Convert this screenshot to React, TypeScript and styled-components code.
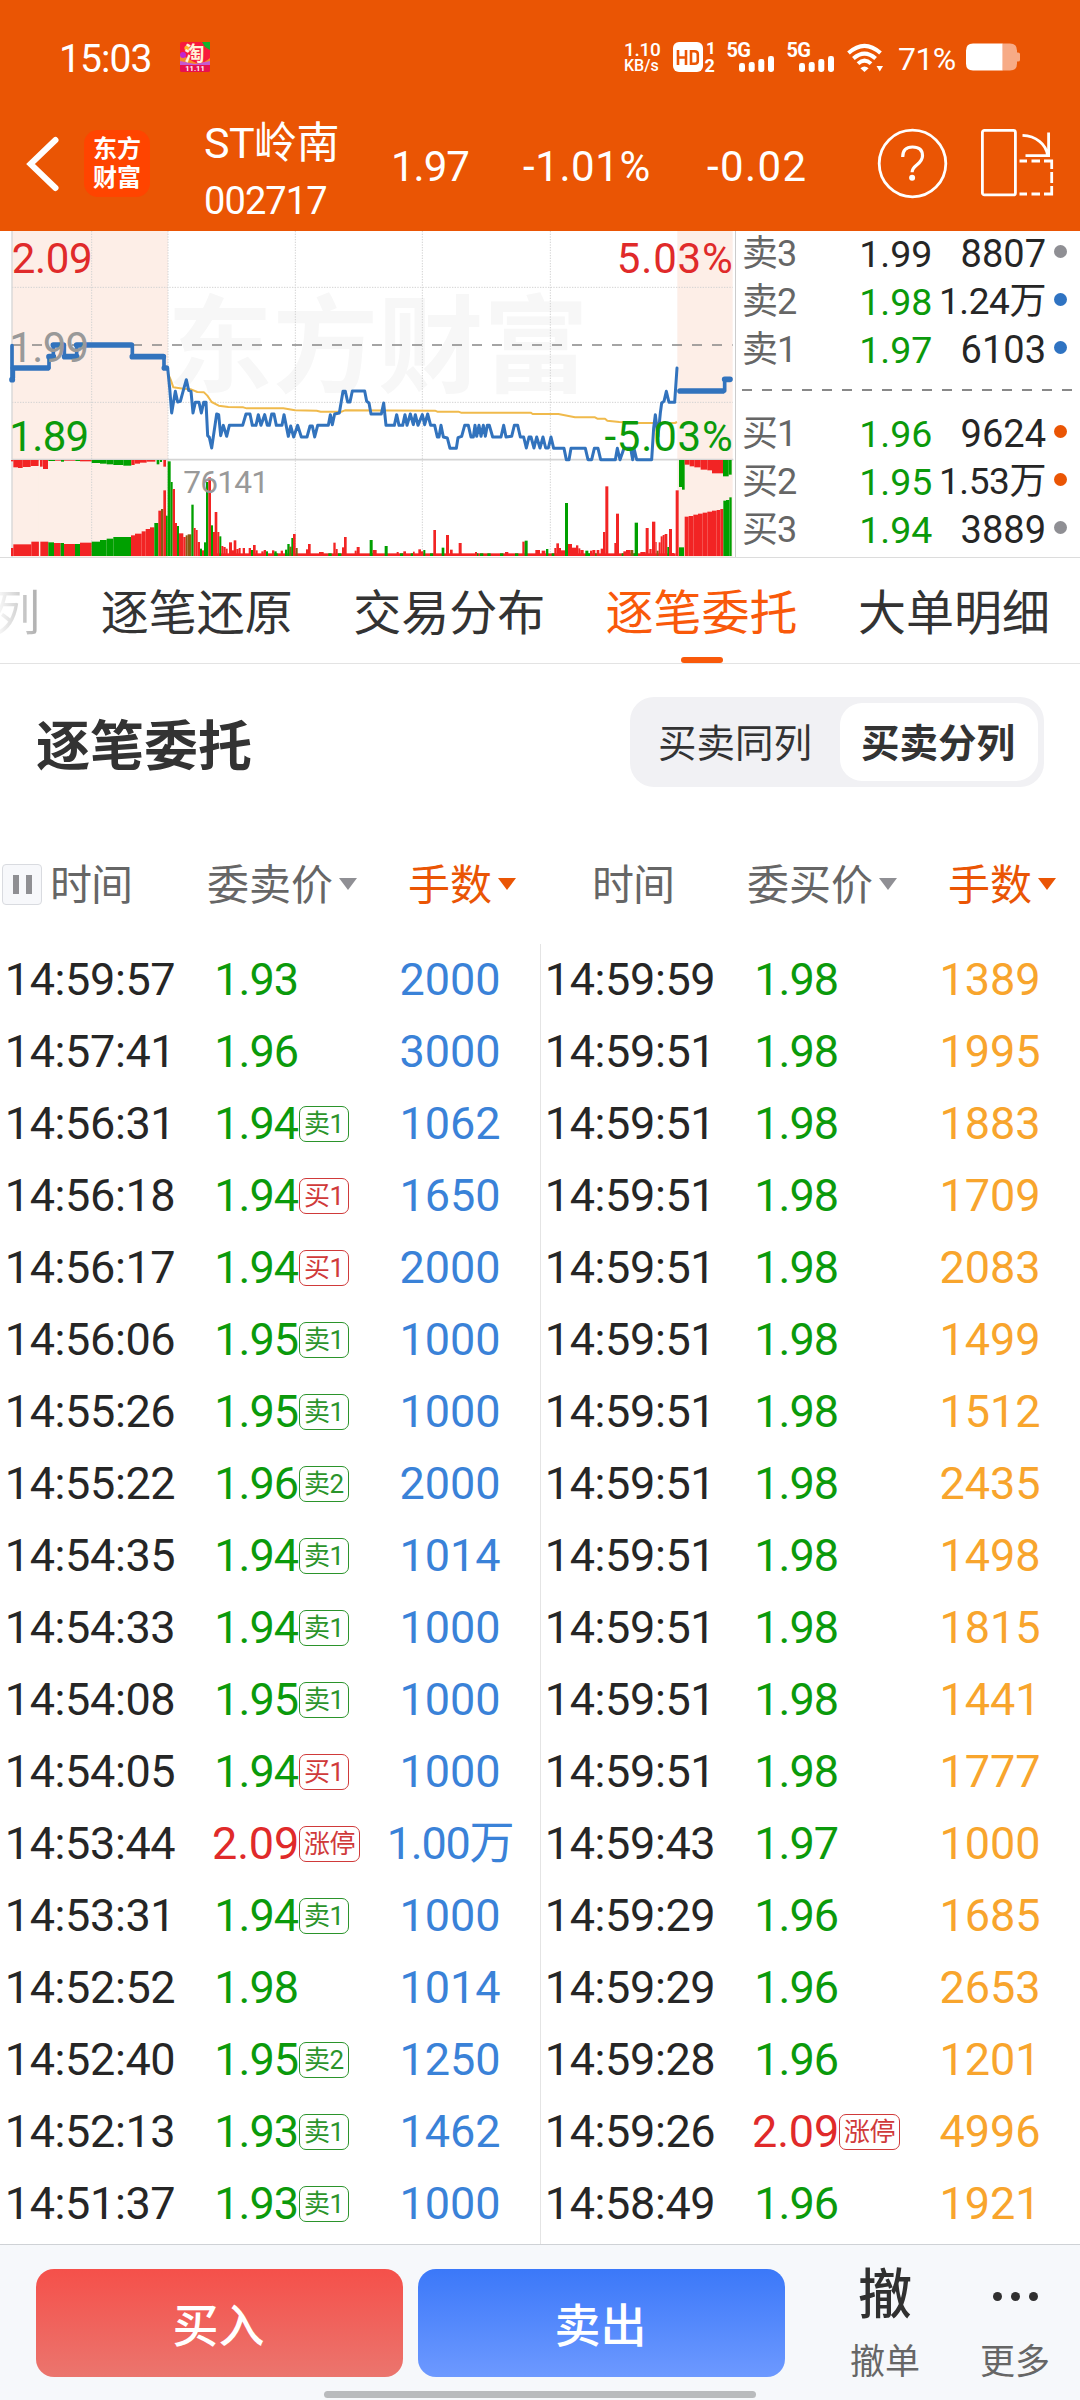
import React from 'react';
import styled, { createGlobalStyle } from 'styled-components';

const GlobalStyle = createGlobalStyle`
  * { box-sizing: border-box; }
  html, body { margin: 0; padding: 0; background: #fff; }
  body {
    width: 1080px;
    font-family: Roboto, "Noto Sans CJK SC", sans-serif;
    color: #333;
    overflow-x: hidden;
  }
  svg { overflow: visible; flex: none; }
`;

const ORANGE = '#ea5504';
const GREEN = '#0b9a0b';
const RED = '#e02a2a';
const BLUE = '#3a82d8';
const AMBER = '#f8a52d';

const Page = styled.div`
  width: 1080px;
  height: 2400px;
  display: flex;
  flex-direction: column;
  overflow: hidden;
  background: #fff;
`;

/* ---------- header ---------- */

const Header = styled.header`
  height: 231px;
  flex: none;
  background: ${ORANGE};
  color: #fff;
`;

const StatusBar = styled.div`
  height: 96px;
  padding: 18px 60px 0 59px;
  display: flex;
  align-items: center;
`;

const Clock = styled.span`
  width: 121px;
  font-size: 39px;
  letter-spacing: -0.9px;
  line-height: 40px;
  padding-top: 4px;
`;

const StatusRight = styled.div`
  margin-left: auto;
  display: flex;
  align-items: center;
  height: 30px;
`;

const NetSpeed = styled.div`
  width: 49px;
  display: flex;
  flex-direction: column;
  font-weight: 500;
  font-size: 19px;
  line-height: 17px;
  letter-spacing: -0.3px;
  small { font-size: 16px; line-height: 15px; letter-spacing: 0; }
`;

const Percent = styled.span`
  width: 68px;
  font-size: 32px;
  line-height: 30px;
  letter-spacing: -0.6px;
  padding-top: 3px;
`;

const NavBar = styled.div`
  height: 135px;
  display: flex;
  align-items: center;
  padding-left: 24px;
`;

const Brand = styled.div`
  width: 66px;
  height: 67px;
  margin-left: 22px;
  padding-bottom: 6px;
  border-radius: 14px;
  background: #ff4400;
  display: flex;
  flex-direction: column;
  align-items: center;
  justify-content: center;
  font: 700 24px/29px "Noto Sans CJK SC", sans-serif;
`;

const StockName = styled.div`
  width: 187px;
  margin-left: 54px;
  padding-top: 14px;
  display: flex;
  flex-direction: column;
`;

const NameLine = styled.span`
  font-size: 43px;
  line-height: 58px;
  white-space: nowrap;
  letter-spacing: -0.6px;
`;

const CodeLine = styled.span`
  font-size: 38px;
  line-height: 52px;
  letter-spacing: -0.9px;
  margin-top: 3px;
`;

const Quote = styled.span<{ $w: number; $ls?: number }>`
  width: ${(p) => p.$w}px;
  font-size: 42px;
  line-height: 50px;
  padding-top: 6px;
  white-space: nowrap;
  letter-spacing: ${(p) => p.$ls ?? 0}px;
`;

/* ---------- chart + order book ---------- */

const Market = styled.section`
  height: 327px;
  flex: none;
  display: flex;
  border-bottom: 1px solid #dcdcdc;
`;

const Book = styled.div`
  width: 345px;
  height: 326px;
  border-left: 1px solid #ccc;
  display: flex;
  flex-direction: column;
  padding: 0 13px 0 6px;
`;

const BookRow = styled.div`
  height: 48px;
  display: flex;
  align-items: center;
  font-size: 37.5px;
  line-height: 48px;
  white-space: nowrap;
  &:first-child { margin-top: -1px; }
`;

const BookLabel = styled.span`
  width: 70px;
  font-size: 36px;
  color: #666;
  letter-spacing: -1px;
`;

const BookPrice = styled.span<{ $c: string }>`
  width: 121px;
  text-align: right;
  color: ${(p) => p.$c};
`;

const BookQty = styled.span<{ $wide: boolean }>`
  width: 114px;
  color: #262626;
  display: flex;
  justify-content: flex-end;
  font-size: ${(p) => (p.$wide ? 37 : 38)}px;
  letter-spacing: ${(p) => (p.$wide ? -0.4 : 0)}px;
`;

const BookDot = styled.i<{ $c: string }>`
  width: 13px;
  height: 13px;
  margin: 0 0 5px 8px;
  border-radius: 50%;
  background: ${(p) => p.$c};
`;

const BookSplit = styled.div`
  height: 36px;
  padding-top: 15px;
  &::before {
    content: '';
    display: block;
    width: 331px;
    height: 2px;
    background: repeating-linear-gradient(90deg, #888 0 10px, transparent 10px 20px);
  }
`;

/* ---------- tabs ---------- */

const Tabs = styled.nav`
  height: 106px;
  flex: none;
  display: flex;
  justify-content: flex-end;
  gap: 60.4px;
  padding-right: 30px;
  border-bottom: 1px solid #e3e3e3;
  overflow: hidden;
`;

const Tab = styled.div<{ $on?: boolean; $fade?: boolean }>`
  flex: none;
  display: flex;
  flex-direction: column;
  align-items: center;
  font-size: 48px;
  line-height: 99px;
  padding-top: 6px;
  white-space: nowrap;
  color: ${(p) => (p.$on ? '#f9590a' : '#333')};
  ${(p) =>
    p.$fade &&
    `background: linear-gradient(90deg, #fff 5%, #aaa 100%);
     background-clip: text; -webkit-background-clip: text; color: transparent;`}
  &::after {
    content: '';
    width: 42px;
    height: 6px;
    margin-top: -6px;
    border-radius: 3px;
    background: ${(p) => (p.$on ? '#f9590a' : 'transparent')};
  }
`;

const TitleRow = styled.div`
  height: 144px;
  flex: none;
  display: flex;
  align-items: center;
  justify-content: space-between;
  padding: 12px 36px 0;
`;

const Title = styled.h2`
  margin: 0;
  padding-top: 11px;
  font-size: 54px;
  font-weight: 600;
  line-height: 70px;
`;

const Segmented = styled.div`
  width: 414px;
  height: 90px;
  padding: 6px;
  display: flex;
  background: #f1f1f4;
  border-radius: 24px;
`;

const Segment = styled.div<{ $on?: boolean }>`
  flex: ${(p) => (p.$on ? '0 0 198px' : '1')};
  padding: 1px ${(p) => (p.$on ? 2 : 6)}px 0 0;
  border-radius: 22px;
  font-size: 38.5px;
  line-height: 80px;
  text-align: center;
  font-weight: ${(p) => (p.$on ? 700 : 400)};
  background: ${(p) => (p.$on ? '#fff' : 'transparent')};
`;

/* ---------- order table ---------- */

const HeadRow = styled.div`
  height: 136px;
  flex: none;
  display: grid;
  grid-template-columns: repeat(6, 180px);
  align-items: center;
  font-size: 42px;
  line-height: 60px;
  color: #666;
  padding-top: 19px;
`;

const HeadCell = styled.div<{ $pad: number; $hot?: boolean; $ls?: number }>`
  display: flex;
  align-items: center;
  padding-left: ${(p) => p.$pad}px;
  letter-spacing: ${(p) => p.$ls ?? 0}px;
  color: ${(p) => (p.$hot ? ORANGE : '#666')};
  white-space: nowrap;
`;

const Caret = styled.i<{ $c: string; $gap: number }>`
  margin: 0 0 4px ${(p) => p.$gap}px;
  border: 9px solid transparent;
  border-top: 12px solid ${(p) => p.$c};
  border-bottom: 0;
`;

const Pause = styled.div`
  width: 40px;
  height: 41px;
  margin: 0 8px 3px 0;
  border: 1px solid #d9dbe0;
  border-radius: 4px;
  background: #f7f8fb;
  display: flex;
  align-items: center;
  justify-content: center;
  gap: 7px;
  &::before, &::after {
    content: '';
    width: 6px;
    height: 19px;
    background: #8f8f93;
  }
`;

const Halves = styled.div`
  height: 1300px;
  flex: none;
  display: grid;
  grid-template-columns: 540px 540px;
  overflow: hidden;
`;

const Half = styled.div<{ $line?: boolean }>`
  box-shadow: ${(p) => (p.$line ? 'inset 1px 0 #e4e4e4' : 'none')};
`;

const Row = styled.div`
  height: 72px;
  display: grid;
  grid-template-columns: 180px 180px 180px;
  align-items: center;
  font-size: 45px;
  line-height: 72px;
  white-space: nowrap;
`;

const Time = styled.span`
  text-align: center;
  color: #262626;
  letter-spacing: -0.4px;
`;

const PriceCell = styled.span`
  display: flex;
  align-items: center;
`;

const Price = styled.span<{ $limit: boolean }>`
  width: ${(p) => (p.$limit ? 119 : 118)}px;
  margin-right: ${(p) => (p.$limit ? 0 : 1)}px;
  text-align: right;
  letter-spacing: ${(p) => (p.$limit ? -0.2 : -1)}px;
  color: ${(p) => (p.$limit ? RED : GREEN)};
`;

const Badge = styled.span<{ $c: string }>`
  height: 36px;
  padding: 0 4px;
  border: 1.5px solid ${(p) => p.$c};
  border-radius: 7px;
  color: ${(p) => p.$c};
  font-size: 26px;
  line-height: 34px;
  letter-spacing: -0.5px;
`;

const Qty = styled.span<{ $c: string; $wide: boolean }>`
  text-align: center;
  color: ${(p) => p.$c};
  letter-spacing: ${(p) => (p.$wide ? -1.2 : 0)}px;
`;

/* ---------- footer ---------- */

const Footer = styled.footer`
  height: 157px;
  flex: none;
  display: flex;
  flex-direction: column;
  align-items: center;
  background: #f6f8fb;
  border-top: 1px solid #cfd2d6;
`;

const Actions = styled.div`
  width: 1080px;
  height: 146px;
  padding: 24px 0 0 36px;
  display: flex;
`;

const Trade = styled.button<{ $from: string; $to: string }>`
  width: 367px;
  height: 108px;
  margin-right: 15px;
  padding: 0 2px 3px 0;
  border: 0;
  border-radius: 18px;
  font: 500 46px/104px "Noto Sans CJK SC", sans-serif;
  color: #fff;
  background: linear-gradient(${(p) => p.$from}, ${(p) => p.$to});
`;

const Tool = styled.div<{ $w: number }>`
  width: ${(p) => p.$w}px;
  height: 108px;
  display: flex;
  flex-direction: column;
  align-items: center;
  font-size: 35px;
  line-height: 44px;
  color: #666;
`;

const ToolGlyph = styled.div`
  height: 54px;
  flex: none;
  margin-bottom: 18px;
  display: flex;
  align-items: center;
  gap: 9px;
  font-size: 54px;
  line-height: 54px;
  font-weight: 500;
  color: #303030;
`;

const Dot = styled.i`
  width: 9px;
  height: 9px;
  border-radius: 50%;
  background: #303030;
`;

const HomeBar = styled.div`
  width: 432px;
  height: 7px;
  border-radius: 4px;
  background: #b9bbbd;
`;

/* ---------- drawings ---------- */

const TaoIcon = () => (
  <svg width="30" height="30" viewBox="0 0 30 30">
    <rect width="30" height="30" rx="2" fill="#f8193c" />
    <path d="M0 12 Q7 16 14 20 T30 16 V23 H0Z" fill="#f78a28" />
    <path d="M0 19 L15 22 L30 19 V24 H0Z" fill="#c65ad0" />
    <path d="M22 0 H30 V8 L25 5Z" fill="#12b42c" />
    <circle cx="3" cy="13" r="3" fill="#c026d0" />
    <circle cx="7" cy="6" r="2.6" fill="#ffb52a" />
    <text x="4.5" y="19" fontSize="20" fontWeight="700" fill="#fff3d8" fontFamily="Noto Sans CJK SC, sans-serif">淘</text>
    <path d="M0 23 H30 V28 Q30 30 28 30 H2 Q0 30 0 28Z" fill="#e8104f" />
    <text x="15" y="29.4" fontSize="7.5" fontWeight="700" fill="#fff" textAnchor="middle">11.11</text>
  </svg>
);

const HdIcon = () => (
  <svg width="54" height="30" viewBox="0 0 54 30">
    <rect width="30" height="30" rx="6" fill="#fff" />
    <path d="M5 8 V23 M13 8 V23 M5 15.5 H13 M18 9.2 H21.5 Q24.8 9.2 24.8 12 V19 Q24.8 21.8 21.5 21.8 H18Z" stroke={ORANGE} strokeWidth="2.6" fill="none" />
    <text x="33" y="12.3" fontSize="17" fontWeight="700" fill="#fff">1</text>
    <text x="31.5" y="29.8" fontSize="18" fontWeight="700" fill="#fff">2</text>
  </svg>
);

const Signal = () => (
  <svg width="60" height="30" viewBox="0 0 60 30">
    <text x="-0.5" y="14.6" fontSize="20" fontWeight="700" fill="#fff" letterSpacing="-0.8">5G</text>
    <rect x="12" y="21" width="6" height="9" rx="2.4" fill="#fff" />
    <rect x="21.7" y="20" width="6" height="10" rx="2.4" fill="#fff" />
    <rect x="31.3" y="17" width="6" height="13" rx="2.4" fill="#fff" />
    <rect x="41" y="14" width="6" height="16" rx="2.4" fill="#fff" />
  </svg>
);

const Wifi = () => (
  <svg width="51" height="30" viewBox="0 0 51 30">
    <g fill="none" stroke="#fff" strokeWidth="4">
      <path d="M1.5 11 Q17.5 -3.4 33.5 11" />
      <path d="M6.4 16.5 Q17.5 6.6 28.6 16.5" />
      <path d="M11 21.6 Q17.5 15.6 24 21.6" />
    </g>
    <path d="M13.4 26.2 Q17.5 22.8 21.6 26.2 L17.5 30Z" fill="#fff" />
    <path d="M29.5 24 H36 L32.8 29.5Z" fill="#fff" />
  </svg>
);

const Battery = () => (
  <svg width="54" height="28" viewBox="0 0 54 28">
    <path d="M7 0.5 H44 Q51 0.5 51 7.5 V9.5 H52 Q54 9.5 54 11 V17 Q54 18.5 52 18.5 H51 V20.5 Q51 27.5 44 27.5 H36 V0.5Z" fill="#f7ab86" />
    <path d="M36.4 0.5 H7 Q0 0.5 0 7.5 V20.5 Q0 27.5 7 27.5 H36.4Z" fill="#fff" />
  </svg>
);

const Back = () => (
  <svg width="38" height="60" viewBox="0 0 38 60">
    <path d="M31.5 6 L6.5 30 L31.5 54" fill="none" stroke="#fff" strokeWidth="6" strokeLinecap="round" />
  </svg>
);

const HelpIcon = () => (
  <svg width="70" height="70" viewBox="0 0 70 70" fill="none" stroke="#fff" strokeWidth="2.8">
    <circle cx="34.5" cy="34.5" r="33.3" />
    <path d="M24.7 28 Q24.7 18 34.5 18 Q44.5 18 44.5 26.8 Q44.5 31.5 39 35.7 Q34.1 39.5 34.1 43.3" strokeWidth="3.2" />
    <circle cx="34.1" cy="48.8" r="3" fill="#fff" stroke="none" />
  </svg>
);

const RotateSvg = styled.svg`
  margin-left: 32px;
`;

const RotateIcon = () => (
  <RotateSvg width="74" height="70" viewBox="0 1 74 70" fill="none" stroke="#fff" strokeWidth="2.8">
    <rect x="2.4" y="2.4" width="33" height="64.5" rx="2" />
    <path d="M42.5 7.4 C56 8 66 16 67.5 27 M68.6 4.5 V27.6 H45.5" />
    <path d="M39.5 33 H47 M51.5 33 H60 M64 33 H71.7 V41 M71.7 44 V55 M71.7 58 V66 H64 M60 66 H51.5 M47 66 H39.5" />
  </RotateSvg>
);

/* Chart geometry is kept at three units per pixel. */
const PRICE =
  '495,420 503,420 509,480 515,555 526,490 533,522 541,520 550,487 559,455 566,487 573,490 579,555 586,523 597,523 604,555 611,523 618,523 623,623 628,628 635,660 650,558 656,560 662,623 670,592 680,625 688,592 728,592 738,558 750,558 757,592 768,592 775,560 783,592 794,560 802,592 808,592 815,558 822,558 829,592 846,592 852,560 865,625 872,594 881,627 893,592 904,627 921,627 930,594 937,594 944,627 953,592 985,592 991,560 997,590 1004,558 1018,555 1029,490 1036,490 1043,522 1050,522 1057,489 1094,489 1100,520 1107,525 1113,558 1144,558 1151,525 1158,592 1183,592 1190,560 1197,592 1208,592 1215,560 1221,592 1231,558 1240,590 1246,560 1254,592 1267,560 1274,590 1283,558 1292,592 1304,592 1312,627 1317,627 1323,592 1330,627 1342,630 1350,661 1369,661 1374,629 1385,625 1394,592 1405,592 1413,627 1420,627 1425,592 1430,625 1437,592 1443,625 1450,592 1456,625 1462,592 1468,592 1478,627 1503,627 1511,592 1518,627 1535,625 1543,592 1553,592 1561,627 1571,627 1579,660 1587,627 1593,627 1602,660 1610,627 1620,660 1629,627 1637,660 1645,660 1653,627 1661,661 1692,661 1699,695 1707,695 1713,661 1756,661 1764,695 1775,695 1783,661 1794,661 1802,695 1846,695 1852,661 1860,695 1872,661 1892,661 1898,695 1902,661 1910,695 1955,695 1961,600 1966,560 1974,625 1981,555 1985,525 1992,520 1999,490 2007,523 2024,523 2031,420';

const AVERAGE =
  '503,435 512,455 520,478 550,482 573,484 592,492 612,493 622,503 635,522 656,533 685,537 730,538 740,541 850,541 885,547 950,548 962,551 1025,551 1035,547 1305,548 1312,551 1375,551 1383,554 1592,554 1598,558 1675,558 1725,568 1785,568 1792,572 1815,572 1822,578 1858,582 1910,585 2025,585 2031,582';

type Bar = [number, number, number, string];
const R = '#f22424';
const G = '#00a000';
const B = '#8a5a12';

const VOLUME: Bar[] = [
  [33, 7, 960, R], [40, 54, 949, R], [94, 23, 941, R], [121, 24, 941, R], [145, 17, 943, G], [162, 20, 945, R],
  [182, 10, 945, G], [192, 33, 948, R], [225, 15, 948, G], [240, 35, 944, R], [275, 25, 941, G], [300, 20, 936, G],
  [320, 20, 932, G], [340, 53, 927, G], [393, 12, 922, R], [405, 20, 917, R], [425, 12, 910, R], [437, 13, 903, R],
  [450, 13, 898, R], [463, 12, 885, G], [475, 8, 848, R], [483, 7, 843, B], [490, 8, 787, R], [498, 5, 863, G],
  [503, 9, 700, G], [512, 6, 762, G], [518, 7, 783, R], [525, 6, 885, R], [531, 6, 894, G], [537, 13, 916, R],
  [550, 7, 927, R], [557, 6, 922, B], [563, 11, 919, B], [574, 7, 830, G], [581, 6, 900, R], [587, 6, 906, R],
  [593, 7, 942, R], [600, 6, 962, G], [606, 6, 967, R], [612, 6, 943, G], [618, 7, 762, G], [625, 8, 748, R],
  [633, 6, 892, G], [639, 6, 912, R], [644, 8, 852, R], [652, 6, 912, R], [658, 6, 925, G], [664, 6, 954, R],
  [670, 7, 957, R], [677, 6, 962, R], [687, 9, 943, R], [696, 6, 967, R], [701, 8, 937, R], [709, 7, 963, R],
  [716, 6, 960, R], [728, 7, 960, R], [746, 7, 960, R], [753, 6, 966, G], [759, 8, 951, R], [767, 6, 967, R],
  [784, 7, 970, R], [791, 7, 966, R], [798, 6, 970, G], [816, 7, 967, R], [823, 7, 970, G], [842, 7, 968, R],
  [855, 7, 965, G], [862, 7, 948, G], [868, 7, 956, B], [874, 6, 930, G], [879, 8, 918, R], [887, 6, 960, B],
  [918, 6, 964, R], [924, 8, 948, R], [957, 14, 972, R], [1000, 7, 944, R], [1007, 6, 963, R], [1026, 6, 958, R],
  [1032, 8, 927, R], [1064, 6, 968, R], [1070, 9, 957, R], [1109, 9, 936, G], [1118, 12, 966, R], [1154, 9, 954, G],
  [1190, 6, 972, R], [1210, 8, 970, R], [1239, 5, 971, R], [1255, 8, 964, R], [1263, 7, 970, R], [1270, 6, 966, G],
  [1300, 8, 906, R], [1325, 8, 959, G], [1338, 9, 921, R], [1350, 8, 965, R], [1376, 9, 945, R], [1425, 6, 972, R],
  [1515, 10, 972, R], [1567, 7, 941, R], [1574, 9, 938, G], [1606, 14, 966, R], [1625, 11, 968, R], [1638, 7, 963, G],
  [1663, 6, 960, R], [1669, 8, 946, R], [1677, 6, 960, R], [1683, 12, 967, R], [1695, 9, 825, G], [1704, 12, 948, R],
  [1716, 12, 959, R], [1728, 7, 952, R], [1735, 6, 961, R], [1741, 10, 966, R], [1756, 9, 968, G], [1770, 7, 968, R],
  [1777, 9, 966, R], [1790, 8, 966, R], [1802, 7, 962, R], [1809, 7, 912, R], [1816, 9, 775, R], [1843, 5, 945, R],
  [1848, 9, 857, R], [1870, 8, 970, R], [1878, 14, 966, R], [1892, 8, 966, B], [1904, 10, 884, G], [1921, 16, 972, R],
  [1937, 9, 900, R], [1948, 7, 963, R], [1956, 10, 881, R], [1966, 4, 942, R], [1970, 6, 968, B], [1976, 6, 943, R],
  [1982, 6, 925, R], [1988, 6, 921, R], [1994, 8, 918, R], [2002, 6, 957, G], [2007, 9, 903, R], [2016, 6, 975, R],
  [2027, 9, 787, R], [2037, 15, 958, G], [2054, 12, 866, R], [2066, 14, 864, R], [2080, 14, 860, R], [2094, 14, 857, R],
  [2108, 14, 854, R], [2122, 14, 851, R], [2136, 14, 848, R], [2150, 11, 846, R], [2161, 9, 843, R],
  [2170, 8, 818, G], [2178, 10, 816, G], [2188, 7, 808, G],
];

const HANGING: Bar[] = [
  [33, 7, 700, R], [40, 14, 718, R], [54, 14, 720, R], [68, 24, 717, R], [92, 24, 714, R], [120, 8, 716, R],
  [129, 15, 723, R], [145, 20, 699, G], [165, 18, 698, R], [183, 9, 701, G], [192, 34, 698, R], [226, 14, 699, G],
  [240, 35, 700, R], [275, 25, 705, G], [300, 20, 707, G], [320, 20, 709, G], [340, 30, 711, G], [370, 24, 713, G],
  [394, 10, 711, R], [404, 16, 707, R], [420, 20, 704, R], [440, 26, 701, R], [470, 8, 709, G], [480, 6, 702, G],
  [490, 8, 716, R], [2037, 9, 777, G], [2046, 8, 785, G], [2054, 15, 710, R], [2069, 14, 715, R], [2083, 19, 718, R],
  [2102, 20, 725, R], [2122, 14, 727, R], [2136, 33, 736, R], [2169, 17, 745, G], [2186, 9, 740, G],
];

const BASE_GREENS = [748, 823, 985, 1014, 1110, 1200, 1232, 1290, 1425, 1440, 1462, 1500, 1545, 1655, 1760, 1780, 1865, 1900];

const Chart = () => (
  <svg width="735" height="326" viewBox="0 9 2205 978" fill="none">
    <rect x="36" y="9" width="468" height="978" fill="#fdeee7" />
    <rect x="2032" y="9" width="166" height="978" fill="#fdeee7" />
    <text x="502" y="468" fontSize="316" fontWeight="700" fill="#f7f7f7" fontFamily="Noto Sans CJK SC, sans-serif">东方财富</text>
    <g stroke="#d2d2d2" strokeWidth="3" strokeDasharray="4 4">
      <path d="M36 178 H2198 M36 523 H2198" />
      <path d="M275 9 V984 M504 9 V984 M886 9 V984 M1267 9 V984 M1651 9 V984" />
    </g>
    <path d="M36 9 V987" stroke="#d6d6d6" strokeWidth="4" />
    <path d="M36 695 H2200" stroke="#d4d4d4" strokeWidth="5" />
    <path d="M36 351 H2198" stroke="#888" strokeWidth="5" strokeDasharray="30 30" />

    <g>
      <rect x="640" y="976" width="1387" height="8" fill={R} />
      {BASE_GREENS.map((x) => (
        <rect key={x} x={x} y="976" width="10" height="8" fill={G} />
      ))}
      {VOLUME.map(([x, w, y, c]) => (
        <rect key={x} x={x} y={y} width={w} height={984 - y} fill={c} />
      ))}
      {HANGING.map(([x, w, y, c]) => (
        <rect key={x} x={x} y="696" width={w} height={y - 696} fill={c} />
      ))}
      <path d="M118 700 V984" stroke="#fdeee7" strokeWidth="2" />
    </g>

    <polyline points={AVERAGE} stroke="#f0ba4c" strokeWidth="6" strokeLinejoin="round" />
    <g stroke="#3273bd" strokeLinejoin="round" strokeLinecap="round">
      <path d="M36 353 V455 M40 420 V450 M147 420 V386 M160 386 V351 M193 351 V386 M230 386 V351 M397 351 V386 M492 386 V420" strokeWidth="11" />
      <path d="M36 455 H37 M40 420 H143 M147 386 H160 M160 351 H190 M194 386 H230 M230 351 H394 M397 386 H490 M493 420 H499" strokeWidth="17" />
      <polyline points={PRICE} strokeWidth="9" />
      <path d="M2174 489 V454" strokeWidth="11" />
      <path d="M2040 489 H2168 M2174 454 H2190" strokeWidth="17" />
    </g>

    <g fontSize="126">
      <text x="35" y="134" fill={RED} letterSpacing="-1">2.09</text>
      <text x="2201" y="134" fill={RED} textAnchor="end" letterSpacing="2.5">5.03%</text>
      <text x="28" y="401" fill="#999" letterSpacing="-2">1.99</text>
      <text x="28" y="668" fill={GREEN} letterSpacing="-2">1.89</text>
      <text x="2201" y="668" fill={GREEN} textAnchor="end" letterSpacing="2.5">-5.03%</text>
    </g>
    <text x="550" y="796" fontSize="95" letterSpacing="-2.5" fill="#999">76141</text>
  </svg>
);

/* ---------- data ---------- */

const ASKS = [
  ['卖3', '1.99', '8807', '#262626', '#8f8f94'],
  ['卖2', '1.98', '1.24万', GREEN, '#2f73c2'],
  ['卖1', '1.97', '6103', GREEN, '#2f73c2'],
];
const BIDS = [
  ['买1', '1.96', '9624', GREEN, ORANGE],
  ['买2', '1.95', '1.53万', GREEN, ORANGE],
  ['买3', '1.94', '3889', GREEN, '#8f8f94'],
];

const SELLS = `14:59:57 1.93 2000
14:57:41 1.96 3000
14:56:31 1.94 1062 卖1
14:56:18 1.94 1650 买1
14:56:17 1.94 2000 买1
14:56:06 1.95 1000 卖1
14:55:26 1.95 1000 卖1
14:55:22 1.96 2000 卖2
14:54:35 1.94 1014 卖1
14:54:33 1.94 1000 卖1
14:54:08 1.95 1000 卖1
14:54:05 1.94 1000 买1
14:53:44 2.09 1.00万 涨停
14:53:31 1.94 1000 卖1
14:52:52 1.98 1014
14:52:40 1.95 1250 卖2
14:52:13 1.93 1462 卖1
14:51:37 1.93 1000 卖1`;

const BUYS = `14:59:59 1.98 1389
14:59:51 1.98 1995
14:59:51 1.98 1883
14:59:51 1.98 1709
14:59:51 1.98 2083
14:59:51 1.98 1499
14:59:51 1.98 1512
14:59:51 1.98 2435
14:59:51 1.98 1498
14:59:51 1.98 1815
14:59:51 1.98 1441
14:59:51 1.98 1777
14:59:43 1.97 1000
14:59:29 1.96 1685
14:59:29 1.96 2653
14:59:28 1.96 1201
14:59:26 2.09 4996 涨停
14:58:49 1.96 1921`;

const OrderList = ({ data, color, line }: { data: string; color: string; line?: boolean }) => (
  <Half $line={line}>
    {data.split('\n').map((entry, i) => {
      const [time, price, qty, tag] = entry.split(' ');
      return (
        <Row key={i}>
          <Time>{time}</Time>
          <PriceCell>
            <Price $limit={price === '2.09'}>{price}</Price>
            {tag && <Badge $c={tag[0] === '卖' ? '#2b942b' : '#d03a3a'}>{tag}</Badge>}
          </PriceCell>
          <Qty $c={color} $wide={qty.includes('万')}>{qty}</Qty>
        </Row>
      );
    })}
  </Half>
);

const BookSide = ({ rows }: { rows: string[][] }) => (
  <>
    {rows.map(([label, price, qty, color, dot]) => (
      <BookRow key={label}>
        <BookLabel>{label}</BookLabel>
        <BookPrice $c={color}>{price}</BookPrice>
        <BookQty $wide={qty.includes('万')}>{qty}</BookQty>
        <BookDot $c={dot} />
      </BookRow>
    ))}
  </>
);

export default function App() {
  return (
    <>
      <GlobalStyle />
      <Page>
        <Header>
          <StatusBar>
            <Clock>15:03</Clock>
            <TaoIcon />
            <StatusRight>
              <NetSpeed>
                1.10<small>KB/s</small>
              </NetSpeed>
              <HdIcon />
              <Signal />
              <Signal />
              <Wifi />
              <Percent>71%</Percent>
              <Battery />
            </StatusRight>
          </StatusBar>
          <NavBar>
            <Back />
            <Brand>
              <span>东方</span>
              <span>财富</span>
            </Brand>
            <StockName>
              <NameLine>ST岭南</NameLine>
              <CodeLine>002717</CodeLine>
            </StockName>
            <Quote $w={132} $ls={-1}>1.97</Quote>
            <Quote $w={184} $ls={0.6}>-1.01%</Quote>
            <Quote $w={171} $ls={1.4}>-0.02</Quote>
            <HelpIcon />
            <RotateIcon />
          </NavBar>
        </Header>

        <Market>
          <Chart />
          <Book>
            <BookSide rows={ASKS} />
            <BookSplit />
            <BookSide rows={BIDS} />
          </Book>
        </Market>

        <Tabs>
          <Tab $fade>列</Tab>
          <Tab>逐笔还原</Tab>
          <Tab>交易分布</Tab>
          <Tab $on>逐笔委托</Tab>
          <Tab>大单明细</Tab>
        </Tabs>

        <TitleRow>
          <Title>逐笔委托</Title>
          <Segmented>
            <Segment>买卖同列</Segment>
            <Segment $on>买卖分列</Segment>
          </Segmented>
        </TitleRow>

        <HeadRow>
          <HeadCell $pad={2} $ls={-1}>
            <Pause />
            时间
          </HeadCell>
          <HeadCell $pad={27}>
            委卖价
            <Caret $c="#8f8f94" $gap={6} />
          </HeadCell>
          <HeadCell $pad={48} $hot>
            手数
            <Caret $c={ORANGE} $gap={6} />
          </HeadCell>
          <HeadCell $pad={52} $ls={-1}>时间</HeadCell>
          <HeadCell $pad={27}>
            委买价
            <Caret $c="#8f8f94" $gap={6} />
          </HeadCell>
          <HeadCell $pad={48} $hot>
            手数
            <Caret $c={ORANGE} $gap={6} />
          </HeadCell>
        </HeadRow>

        <Halves>
          <OrderList data={SELLS} color={BLUE} />
          <OrderList data={BUYS} color={AMBER} line />
        </Halves>

        <Footer>
          <Actions>
            <Trade $from="#f5504a" $to="#eb756e">买入</Trade>
            <Trade $from="#3b78f9" $to="#6d99ff">卖出</Trade>
            <Tool $w={170}>
              <ToolGlyph>撤</ToolGlyph>
              撤单
            </Tool>
            <Tool $w={90}>
              <ToolGlyph>
                <Dot />
                <Dot />
                <Dot />
              </ToolGlyph>
              更多
            </Tool>
          </Actions>
          <HomeBar />
        </Footer>
      </Page>
    </>
  );
}
